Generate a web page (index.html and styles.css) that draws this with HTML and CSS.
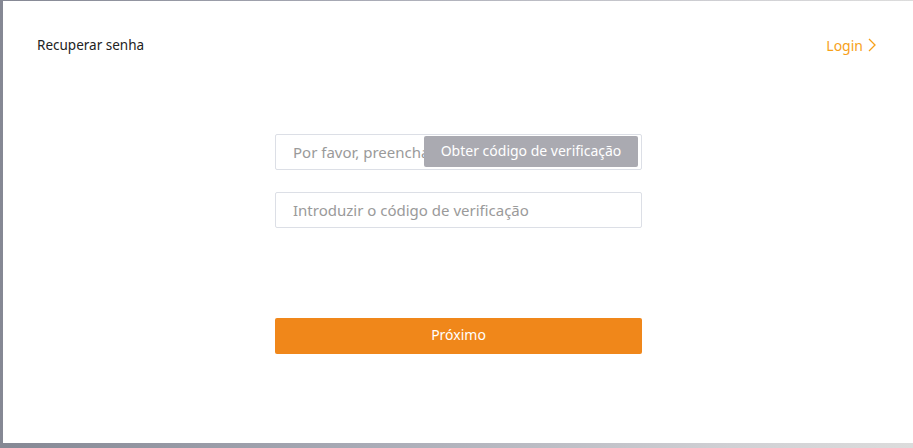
FILE: index.html
```html
<!DOCTYPE html>
<html lang="pt">
<head>
<meta charset="utf-8">
<title>Recuperar senha</title>
<link rel="stylesheet" href="styles.css">
</head>
<body>
<div class="frame">
  <div class="panel">
    <header class="head">
      <h1 class="title">Recuperar senha</h1>
      <a class="login" href="#">Login
        <svg class="chev" width="8" height="14" viewBox="0 0 8 14"><path d="M1 1 L7 7 L1 13" fill="none" stroke="currentColor" stroke-width="1.3"/></svg>
      </a>
    </header>
    <form class="form">
      <div class="field">
        <input class="input" type="text" placeholder="Por favor, preencha o número de telemóvel">
        <button type="button" class="code-btn">Obter código de verificação</button>
      </div>
      <div class="field">
        <input class="input" type="text" placeholder="Introduzir o código de verificação">
      </div>
      <button type="button" class="next">Próximo</button>
    </form>
  </div>
</div>
</body>
</html>
```
FILE: styles.css
```css
html, body {
  margin: 0;
  padding: 0;
  height: 100%;
}
body {
  font-family: "Noto Sans", "Open Sans", sans-serif;
  background: linear-gradient(90deg, #858894 0%, #a9abb6 40%, #d0d0d4 80%, #dcdcdc 100%);
}
.frame {
  height: 448px;
  padding: 1px 0 5px 3px;
  box-sizing: border-box;
}
.panel {
  background: #fff;
  height: 100%;
  box-sizing: border-box;
  padding: 33px 37px 0 34px;
}
.head {
  display: flex;
  justify-content: space-between;
  align-items: center;
  height: 22px;
}
.title {
  margin: 0;
  font-size: 13.5px;
  font-weight: 400;
  color: #222;
}
.login {
  color: #f7a11a;
  text-decoration: none;
  font-size: 14px;
  display: flex;
  align-items: center;
  gap: 5px;
  margin-top: 1px;
}
.chev { display: block; margin-top: -2px; }
.form {
  width: 367px;
  margin: 78px 0 0 238px;
  display: flex;
  flex-direction: column;
}
.field {
  position: relative;
  height: 36px;
  margin-bottom: 22px;
}
.input {
  width: 100%;
  height: 36px;
  box-sizing: border-box;
  border: 1px solid #dcdfe6;
  border-radius: 2px;
  padding: 0 0 1px 17px;
  font-family: inherit;
  font-size: 15px;
  color: #333;
  outline: none;
}
.input::placeholder { color: #9a9a9a; }
.code-btn {
  position: absolute;
  top: 2px;
  right: 4px;
  width: 214px;
  height: 31px;
  border: 0;
  border-radius: 2px;
  background: #aaaab1;
  color: #fff;
  font-family: inherit;
  font-size: 14px;
  padding: 0 0 2px;
}
.next {
  margin-top: 68px;
  height: 36px;
  border: 0;
  border-radius: 2px;
  background: #f0871a;
  color: #fff;
  font-family: inherit;
  font-size: 14px;
  padding: 0 0 3px;
}
```
